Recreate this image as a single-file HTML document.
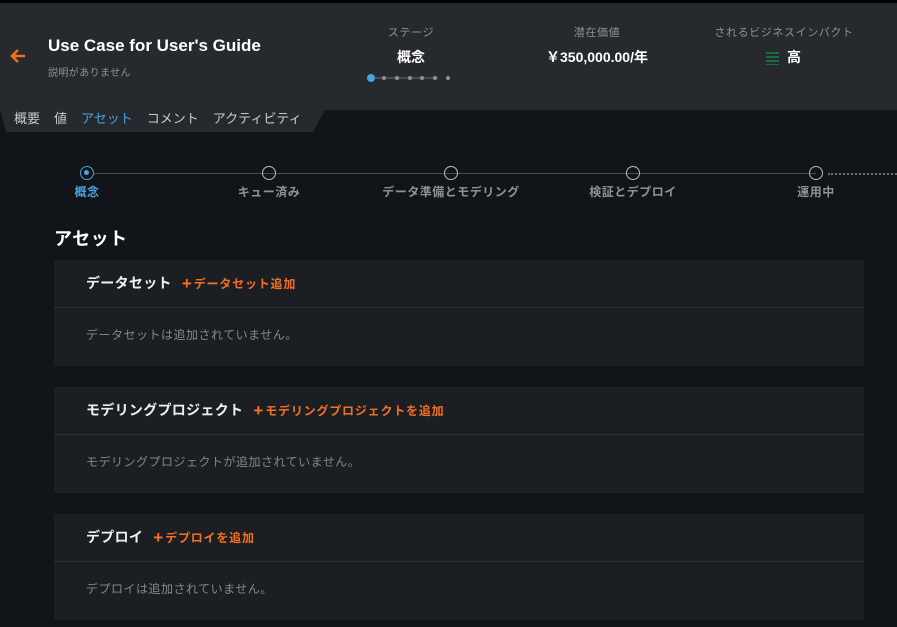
<!DOCTYPE html><html><head><meta charset="utf-8"><style>
*{margin:0;padding:0;box-sizing:border-box}
body{width:897px;height:627px;overflow:hidden;background:#111418;font-family:"Liberation Sans","Noto Sans CJK JP",sans-serif;position:relative;color:#fff}
.a{position:absolute;white-space:nowrap}
.hdr{position:absolute;left:0;top:3px;width:897px;height:107px;background:#262a2f}
.tabs{position:absolute;left:0;top:110px;width:325px;height:22px;background:#262a2f;clip-path:polygon(0 0,100% 0,313px 100%,6px 100%)}
.lbl{font-size:11px;color:#8e9297;text-align:center;width:200px;letter-spacing:0.6px}
.card{position:absolute;left:54px;width:810px;height:106px;background:#1b1f23}
.card .t{position:absolute;left:32px;top:13px;font-size:14px;font-weight:bold;color:#f0f0f0;letter-spacing:0.3px}
.card .add{color:#f37021;font-size:12px;font-weight:bold;margin-left:10px;letter-spacing:0.8px}
.card .add b{font-size:17px;position:relative;top:1px;margin-right:2px;letter-spacing:0}
.card .ln{position:absolute;left:0;right:0;top:47px;height:1px;background:#2c3136}
.card .e{position:absolute;left:32px;top:66px;font-size:12px;color:#83878c;letter-spacing:0.5px}
.st{position:absolute;top:166px;width:14px;height:14px;border:1.5px solid #b8bcc0;border-radius:50%}
.sl{position:absolute;top:183px;font-size:12px;font-weight:bold;color:#8e9297;text-align:center;width:200px;letter-spacing:0.5px}
.tb span{margin-right:14px}
</style></head><body>
<div style="position:absolute;left:0;top:0;width:897px;height:3px;background:#000"></div>
<div class="hdr"></div><div class="tabs"></div>
<svg class="a" style="left:9px;top:47px" width="18" height="18" viewBox="0 0 18 18"><path d="M16 9H3M9 3L3 9l6 6" stroke="#f37021" stroke-width="2.5" fill="none"/></svg>
<div class="a" style="left:48px;top:36px;font-size:17px;font-weight:bold">Use Case for User's Guide</div>
<div class="a" style="left:48px;top:64px;font-size:10px;color:#8e9297;letter-spacing:0.4px">説明がありません</div>
<div class="a tb" style="left:14px;top:108px;font-size:13px;color:#c8cbce"><span>概要</span><span>値</span><span style="color:#4aa3e0">アセット</span><span>コメント</span><span>アクティビティ</span></div>
<div class="a lbl" style="left:311px;top:24px">ステージ</div>
<div class="a" style="left:311px;top:47px;width:200px;text-align:center;font-size:14px;font-weight:bold">概念</div>
<svg class="a" style="left:366px;top:73px" width="90" height="10"><line x1="5" y1="5" x2="72" y2="5" stroke="#6a6e73" stroke-width="1"/><circle cx="5" cy="5" r="4" fill="#4aa3e0"/><circle cx="18" cy="5" r="2" fill="#8e9297"/><circle cx="31" cy="5" r="2" fill="#8e9297"/><circle cx="44" cy="5" r="2" fill="#8e9297"/><circle cx="56" cy="5" r="2" fill="#8e9297"/><circle cx="69" cy="5" r="2" fill="#8e9297"/><circle cx="82" cy="5" r="2" fill="#8e9297"/></svg>
<div class="a lbl" style="left:497px;top:24px">潜在価値</div>
<div class="a" style="left:497px;top:47px;width:200px;text-align:center;font-size:14px;font-weight:bold">￥350,000.00/年</div>
<div class="a lbl" style="left:684px;top:24px">されるビジネスインパクト</div>
<div class="a" style="left:766px;top:52px;width:13px;height:13px;background:repeating-linear-gradient(#1e6b3d 0 2px,transparent 2px 4px)"></div>
<div class="a" style="left:787px;top:47px;font-size:14px;font-weight:bold">高</div>
<div class="a" style="left:94px;top:173px;width:722px;height:1px;background:#4a4e53"></div>
<div class="a" style="left:828px;top:173px;width:69px;border-top:2px dotted #6a6e73"></div>
<div class="st" style="left:80px;border-color:#4aa3e0"><div style="position:absolute;left:3px;top:3px;width:5px;height:5px;border-radius:50%;background:#4aa3e0"></div></div>
<div class="st" style="left:262px"></div><div class="st" style="left:444px"></div><div class="st" style="left:626px"></div><div class="st" style="left:809px"></div>
<div class="sl" style="left:-13px;color:#4aa3e0">概念</div>
<div class="sl" style="left:169px">キュー済み</div>
<div class="sl" style="left:351px">データ準備とモデリング</div>
<div class="sl" style="left:533px">検証とデプロイ</div>
<div class="sl" style="left:716px">運用中</div>
<div class="a" style="left:54px;top:225px;font-size:18px;font-weight:bold;letter-spacing:0.5px">アセット</div>
<div class="card" style="top:260px"><div class="t">データセット<span class="add"><b>+</b>データセット追加</span></div><div class="ln"></div><div class="e">データセットは追加されていません。</div></div>
<div class="card" style="top:387px"><div class="t">モデリングプロジェクト<span class="add"><b>+</b>モデリングプロジェクトを追加</span></div><div class="ln"></div><div class="e">モデリングプロジェクトが追加されていません。</div></div>
<div class="card" style="top:514px"><div class="t">デプロイ<span class="add"><b>+</b>デプロイを追加</span></div><div class="ln"></div><div class="e">デプロイは追加されていません。</div></div>
</body></html>
